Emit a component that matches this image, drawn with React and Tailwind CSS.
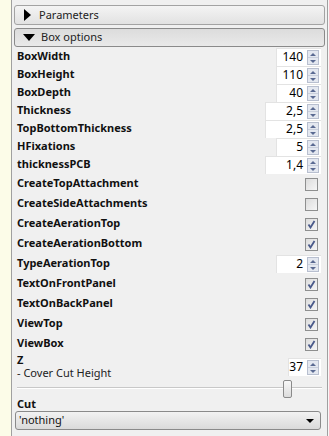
import React from 'react'

const font = { fontFamily: '"Noto Sans", "DejaVu Sans", sans-serif' }

function SpinBox({ value, w = 'w-[45px]' }) {
  return (
    <div className={`flex h-[18px] items-center bg-white border-t border-l border-[#e3e3e3] ${w}`}>
      <span className="mb-[1px] flex-1 pr-[4px] text-right text-[12px] leading-none text-black">{value}</span>
      <div className="mr-[2px] flex h-[15px] w-[12px] flex-col border border-[#b8bfcf] bg-[#e4e8f0]">
        <div className="flex flex-1 items-center justify-center border-b border-[#c9cfdc]">
          <div className="h-0 w-0 border-x-[3px] border-b-[3px] border-x-transparent border-b-[#5a6a92]" />
        </div>
        <div className="flex flex-1 items-center justify-center">
          <div className="h-0 w-0 border-x-[3px] border-t-[3px] border-x-transparent border-t-[#5a6a92]" />
        </div>
      </div>
    </div>
  )
}

function CheckBox({ checked }) {
  return (
    <div className="mr-[3px] flex h-[13px] w-[13px] items-center justify-center border border-[#8e8f8f] bg-gradient-to-br from-[#dcdcdc] to-[#f6f6f6]">
      {checked && (
        <svg width="9" height="9" viewBox="0 0 9 9">
          <path d="M1.5 4.5 L3.5 7.5 L7.5 1" fill="none" stroke="#4a5a8a" strokeWidth="1.8" />
        </svg>
      )}
    </div>
  )
}

function Row({ label, h = 'h-[18px]', children }) {
  return (
    <div className={`flex items-center justify-between pl-[5px] pr-[6px] ${h}`}>
      <span className="mb-[2px] text-[11px] font-bold text-[#111]">{label}</span>
      {children}
    </div>
  )
}

const spins = [
  ['BoxWidth', '140', 'w-[45px]'],
  ['BoxHeight', '110', 'w-[45px]'],
  ['BoxDepth', '40', 'w-[45px]'],
  ['Thickness', '2,5', 'w-[56px]'],
  ['TopBottomThickness', '2,5', 'w-[56px]'],
  ['HFixations', '5', 'w-[45px]'],
  ['thicknessPCB', '1,4', 'w-[56px]'],
]

const checks = [
  ['CreateTopAttachment', false],
  ['CreateSideAttachments', false],
  ['CreateAerationTop', true],
  ['CreateAerationBottom', true],
  ['TypeAerationTop', 'spin'],
  ['TextOnFrontPanel', true],
  ['TextOnBackPanel', true],
  ['ViewTop', true],
  ['ViewBox', true],
]

export default function App() {
  return (
    <div className="flex h-[436px] w-[329px] overflow-hidden bg-[#f0f0f0]" style={font}>
      <div className="w-[11px] shrink-0 bg-[#fcfce8]" />
      <div className="flex-1 border-l border-[#a0a0a0] pt-[5px]">
        <div className="mx-[2px] flex h-[20px] items-center rounded-[3px] border border-[#a3a3a3] bg-gradient-to-b from-[#f4f4f4] to-[#e2e2e2] pl-[9px]">
          <div className="h-0 w-0 border-y-[6px] border-l-[7px] border-y-transparent border-l-black" />
          <span className="ml-[8px] text-[11px] text-[#222]">Parameters</span>
        </div>
        <div className="mx-[2px] mt-[3px] flex h-[19px] items-center rounded-[3px] border border-[#8a8a8a] bg-gradient-to-b from-[#dcdcdc] to-[#e9e9e9] pl-[8px]">
          <div className="h-0 w-0 border-x-[6px] border-t-[7px] border-x-transparent border-t-black" />
          <span className="ml-[6px] text-[11px] text-[#222]">Box options</span>
        </div>
        <div className="mt-[1px]">
          {spins.map(([l, v, w]) => (
            <Row key={l} label={l}>
              <SpinBox value={v} w={w} />
            </Row>
          ))}
          {checks.map(([l, c]) => (
            <Row key={l} label={l} h="h-[20px]">
              {c === 'spin' ? <SpinBox value="2" w="w-[45px]" /> : <CheckBox checked={c} />}
            </Row>
          ))}
          <div className="flex h-[26px] items-center justify-between pl-[5px] pr-[6px]">
            <div className="flex flex-col">
              <span className="text-[11px] font-bold leading-[12px] text-[#111]">Z</span>
              <span className="text-[11px] leading-[14px] text-[#222]">- Cover Cut Height</span>
            </div>
            <SpinBox value="37" w="w-[33px]" />
          </div>
          <div className="relative mx-[5px] h-[18px]">
            <div className="absolute left-0 right-0 top-[7px] h-[2px] border-t border-[#c8c8c8] bg-white" />
            <div className="absolute right-[30px] top-0 h-[18px] w-[9px] rounded-[2px] border border-[#8a8a8a] bg-gradient-to-b from-[#f8f8f8] to-[#dcdcdc]" />
          </div>
          <div className="h-[13px] pl-[5px] text-[11px] font-bold leading-[11px] text-[#111]">Cut</div>
          <div className="ml-[3px] mr-[6px] flex h-[19px] items-center justify-between rounded-[3px] border border-[#8a8a8a] bg-gradient-to-b from-[#f2f2f2] to-[#dadada] pl-[3px] pr-[6px]">
            <span className="mb-[1px] text-[11px] text-[#111]">'nothing'</span>
            <div className="h-0 w-0 border-x-[4px] border-t-[4px] border-x-transparent border-t-black" />
          </div>
        </div>
      </div>
      <div className="w-[2px] shrink-0 border-l border-[#a0a0a0] bg-[#f7f7f7]" />
    </div>
  )
}
